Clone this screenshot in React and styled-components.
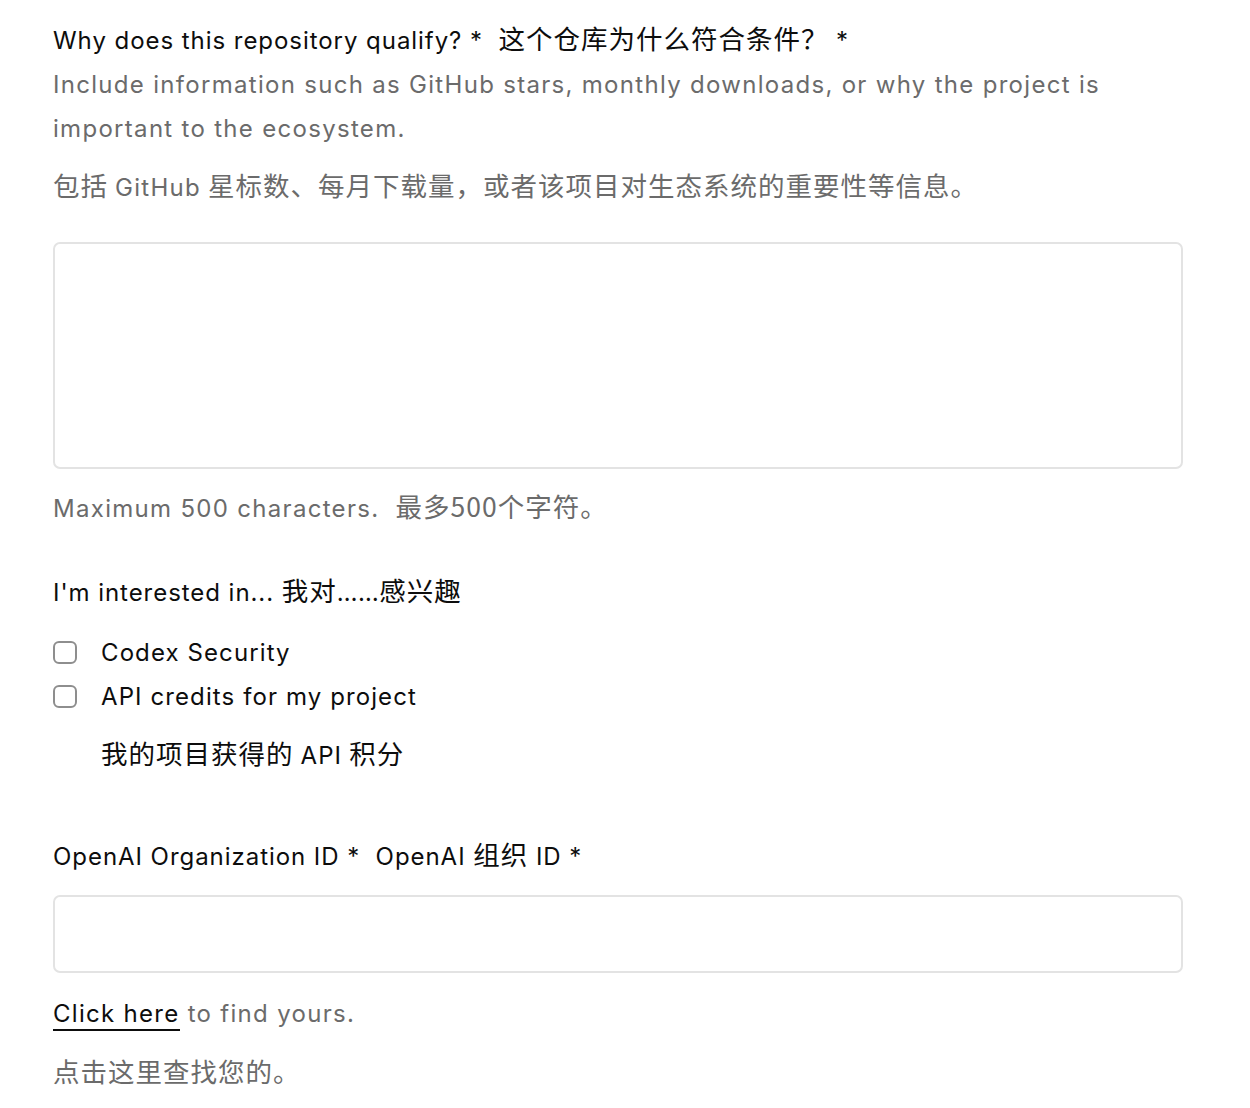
import React from "react";
import styled, { createGlobalStyle } from "styled-components";

const Global = createGlobalStyle`
  html, body { margin: 0; padding: 0; background: #ffffff; }
  body {
    font-family: Inter, "Noto Sans CJK SC", sans-serif;
    color: #0d0d0d;
    -webkit-font-smoothing: antialiased;
  }
  * { box-sizing: border-box; }
`;

const Form = styled.form`
  display: flex;
  flex-direction: column;
  padding: 23px 67px 12px 53px;
  width: 1250px;
  letter-spacing: 1.15px;
`;

const Field = styled.div`
  display: flex;
  flex-direction: column;
  margin-top: ${(p) => p.$mt || 0}px;
`;

const Label = styled.label`
  font-size: 24px;
  line-height: 36px;
  font-weight: 400;
  color: #0d0d0d;
  letter-spacing: 0.95px;
`;

const Zh = styled.span`
  font-family: "Noto Sans CJK SC", sans-serif;
  font-size: 26.5px;
  line-height: 1;
  letter-spacing: 1px;
`;

const Dots = styled.span`
  font-family: Inter, sans-serif;
  font-size: 24px;
  line-height: 1;
  letter-spacing: 0.5px;
`;

const Help = styled.p`
  margin: ${(p) => p.$mt || 0}px 0 0 0;
  font-size: 24px;
  line-height: 44px;
  color: #6b6b6b;
  letter-spacing: 1.3px;
`;

const TextArea = styled.textarea`
  margin-top: ${(p) => p.$mt || 0}px;
  width: 100%;
  height: 227px;
  border: 2px solid #e3e3e3;
  border-radius: 7px;
  resize: none;
  font: inherit;
  font-size: 24px;
  padding: 12px 16px;
  outline: none;
  background: #fff;
`;

const TextInput = styled.input`
  margin-top: ${(p) => p.$mt || 0}px;
  width: 100%;
  height: 78px;
  border: 2px solid #e3e3e3;
  border-radius: 7px;
  font: inherit;
  font-size: 24px;
  padding: 0 16px;
  outline: none;
  background: #fff;
`;

const Options = styled.div`
  display: flex;
  flex-direction: column;
  margin-top: ${(p) => p.$mt || 0}px;
`;

const OptionRow = styled.label`
  display: flex;
  align-items: center;
  gap: 24px;
  height: 44px;
  font-size: 24px;
  color: #0d0d0d;
  letter-spacing: 1.1px;
`;

const Box = styled.span`
  width: 24px;
  height: 23px;
  border: 2px solid #8e8e8e;
  border-radius: 6px;
  flex: none;
`;

const SubLabel = styled.p`
  margin: ${(p) => p.$mt || 0}px 0 0 48px;
  font-size: 24px;
  line-height: 44px;
  color: #0d0d0d;
`;

const Link = styled.a`
  color: #0d0d0d;
  text-decoration: none;
  border-bottom: 2px solid #0d0d0d;
  padding-bottom: 1px;
`;

export default function App() {
  return (
    <>
      <Global />
      <Form onSubmit={(e) => e.preventDefault()}>
        <Field>
          <Label>
            Why does this repository qualify? *&nbsp; <Zh>这个仓库为什么符合条件？</Zh> *
          </Label>
          <Help $mt={4}>
            Include information such as GitHub stars, monthly downloads, or why the project is important to the ecosystem.
          </Help>
          <Help $mt={15}>
            <Zh>包括 </Zh>GitHub<Zh> 星标数、每月下载量，或者该项目对生态系统的重要性等信息。</Zh>
          </Help>
          <TextArea $mt={32} />
          <Help $mt={18}>
            Maximum 500 characters.&nbsp; <Zh>最多500个字符。</Zh>
          </Help>
        </Field>

        <Field $mt={44}>
          <Label>
            I'm interested in...&nbsp;<Zh>我对</Zh>
            <Dots>……</Dots>
            <Zh>感兴趣</Zh>
          </Label>
          <Options $mt={19}>
            <OptionRow>
              <Box />
              Codex Security
            </OptionRow>
            <OptionRow>
              <Box />
              API credits for my project
            </OptionRow>
          </Options>
          <SubLabel $mt={16}>
            <Zh>我的项目获得的 </Zh>API<Zh> 积分</Zh>
          </SubLabel>
        </Field>

        <Field $mt={61}>
          <Label>
            OpenAI Organization ID *&nbsp; OpenAI <Zh>组织</Zh> ID *
          </Label>
          <TextInput $mt={20} />
          <Help $mt={19}>
            <Link href="#">Click here</Link> to find yours.
          </Help>
          <Help $mt={16}>
            <Zh>点击这里查找您的。</Zh>
          </Help>
        </Field>
      </Form>
    </>
  );
}
